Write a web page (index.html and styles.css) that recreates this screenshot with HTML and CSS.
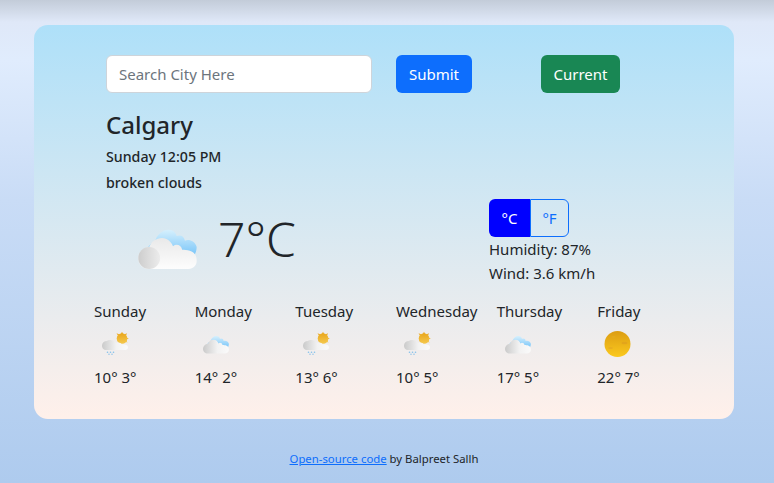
FILE: index.html
```html
<!DOCTYPE html>
<html lang="en">
<head>
<meta charset="utf-8">
<title>Weather</title>
<link rel="stylesheet" href="styles.css">
</head>
<body>
<svg class="defs" width="0" height="0" aria-hidden="true">
  <defs>
    <linearGradient id="gBlue" x1="0" y1="0" x2="0" y2="1"><stop offset="0" stop-color="#d6f0fd"/><stop offset="1" stop-color="#72c2f8"/></linearGradient>
    <linearGradient id="gWhite" x1="0" y1="0" x2="0" y2="1"><stop offset="0" stop-color="#e9e9e9"/><stop offset="1" stop-color="#fdfdfd"/></linearGradient>
    <linearGradient id="gGrey" x1="0" y1="0" x2="1" y2="0"><stop offset="0" stop-color="#cdcdcd"/><stop offset="1" stop-color="#ececec"/></linearGradient>
    <linearGradient id="gFade" x1="0" y1="0" x2="1" y2="0"><stop offset="0" stop-color="#cacaca"/><stop offset=".55" stop-color="#f2f2f2"/><stop offset="1" stop-color="#fafafa"/></linearGradient>
    <linearGradient id="gSun" x1="0" y1="0" x2="0" y2="1"><stop offset="0" stop-color="#dc9d12"/><stop offset="1" stop-color="#fbc91e"/></linearGradient>
    <linearGradient id="gRay" x1="0" y1="0" x2="0" y2="1"><stop offset="0" stop-color="#e9a61c"/><stop offset="1" stop-color="#f5c94e"/></linearGradient>
    <symbol id="cloud" viewBox="0 0 64 48">
      <path fill="url(#gBlue)" d="M11 30C9 24 12 19 18 18C20 9 27 4 33 4C38 4 41 7 42 11C46 9 50 11 51 16C56 14 62 17 64 23C64 27 62 31 60 34H14Z"/>
      <path fill="url(#gWhite)" d="M12 47C5 47 0 42 0 35C0 29 5 24 12 23C14 17 20 13 26 13C32 13 36 17 38 22C42 19 47 21 48 26C54 26 64 27 64 38C64 43 60 47 55 47Z"/>
      <circle cx="12" cy="35" r="12" fill="url(#gGrey)"/>
    </symbol>
    <symbol id="cloud-small" viewBox="0 0 64 48">
      <path fill="url(#gBlue)" d="M11 30C9 24 12 19 18 18C20 9 27 4 33 4C38 4 41 7 42 11C46 9 50 11 51 16C56 14 62 17 64 23C64 27 62 31 60 34H14Z"/>
      <path fill="url(#gFade)" d="M12 47C5 47 0 42 0 35C0 29 5 24 12 23C14 17 20 13 26 13C32 13 36 17 38 22C42 19 47 21 48 26C54 26 64 27 64 38C64 43 60 47 55 47Z"/>
    </symbol>
    <symbol id="rain" viewBox="0 0 30 30">
      <g fill="url(#gRay)">
        <circle cx="21" cy="8.500" r="5.300"/>
        <path d="M21 1.800L22.200 4H19.800ZM27.800 8.500L25 9.700V7.300ZM26 3.300L24.800 6.200L23 4.600ZM15.500 3.300L18.800 4.600L17.300 6.200ZM26.500 13L24 11L25 9.800Z"/>
      </g>
      <path fill="url(#gFade)" d="M5 20C2 20 1 17.500 1 15.500C1 13 3 11 6 11C7 10 10 9.500 12 10.500C13.500 11 14.500 12 15 13C18 12 20 13 20.500 14.200C24 14 27 15 27 17.500C27 19.500 25 20 23 20Z"/>
      <g fill="#86c1ea">
        <circle cx="6.500" cy="22.200" r=".8"/><circle cx="9.500" cy="22.200" r=".8"/><circle cx="12.500" cy="22.200" r=".8"/>
        <circle cx="8" cy="24.300" r=".7"/><circle cx="11" cy="24.300" r=".7"/>
      </g>
    </symbol>
    <symbol id="sun" viewBox="0 0 30 30">
      <circle cx="13.500" cy="14" r="13" fill="url(#gSun)"/>
      <ellipse cx="20.500" cy="13" rx="3" ry="1.200" fill="#e2a51c"/>
      <ellipse cx="6.500" cy="18" rx="2.500" ry="1" fill="#e8ae20"/>
      <ellipse cx="9.500" cy="7" rx="2" ry=".8" fill="#e5ab1e"/>
    </symbol>
  </defs>
</svg>
<main class="card">
  <form class="search">
    <input class="search-input" type="text" placeholder="Search City Here">
    <button class="btn btn-blue" type="button">Submit</button>
    <button class="btn btn-green" type="button">Current</button>
  </form>
  <h1 class="city">Calgary</h1>
  <p class="meta">Sunday 12:05 PM</p>
  <p class="meta">broken clouds</p>
  <section class="now">
    <div class="now-left">
      <svg class="now-icon" viewBox="0 0 64 48"><use href="#cloud"/></svg>
      <span class="now-temp">7°C</span>
    </div>
    <div class="now-right">
      <div class="toggle"><span class="toggle-on">°C</span><span class="toggle-off">°F</span></div>
      <p class="stat">Humidity: 87%</p>
      <p class="stat">Wind: 3.6 km/h</p>
    </div>
  </section>
  <section class="forecast">
    <div class="day"><div class="day-name">Sunday</div><svg class="day-icon" viewBox="0 0 30 30"><use href="#rain"/></svg><div class="day-temp">10° 3°</div></div>
    <div class="day"><div class="day-name">Monday</div><svg class="day-icon" viewBox="-2.500 -11 74 74"><use href="#cloud-small" width="64" height="48"/></svg><div class="day-temp">14° 2°</div></div>
    <div class="day"><div class="day-name">Tuesday</div><svg class="day-icon" viewBox="0 0 30 30"><use href="#rain"/></svg><div class="day-temp">13° 6°</div></div>
    <div class="day"><div class="day-name">Wednesday</div><svg class="day-icon" viewBox="0 0 30 30"><use href="#rain"/></svg><div class="day-temp">10° 5°</div></div>
    <div class="day"><div class="day-name">Thursday</div><svg class="day-icon" viewBox="-2.500 -11 74 74"><use href="#cloud-small" width="64" height="48"/></svg><div class="day-temp">17° 5°</div></div>
    <div class="day"><div class="day-name">Friday</div><svg class="day-icon" viewBox="0 0 30 30"><use href="#sun"/></svg><div class="day-temp">22° 7°</div></div>
  </section>
</main>
<footer class="foot"><a href="#">Open-source code</a> by Balpreet Sallh</footer>
</body>
</html>
```
FILE: styles.css
```css
* { box-sizing: border-box; }
html, body { height: 100%; }
body {
  margin: 0;
  padding: 25px 6px 0 0;
  overflow: hidden;
  font-family: "Noto Sans", "Open Sans", sans-serif;
  font-size: 15px;
  color: #212529;
  background: linear-gradient(180deg, #c3ccd9 0, #dfe8f8 22px, #e0ecfd 60px, #c9dcf6 200px, #aecbee 100%);
}
.defs { position: absolute; }
p { margin: 0; }
.card {
  width: 700px;
  height: 394px;
  margin: 0 auto;
  padding: 30px 0 0 72px;
  border-radius: 14px;
  background: linear-gradient(180deg, #aee0f9 0, #fff0ea 100%);
}
.search { display: flex; align-items: center; height: 38px; }
.search-input {
  width: 266px;
  height: 38px;
  padding: 0 12px;
  border: 1px solid #ced4da;
  border-radius: 6px;
  background: #fff;
  font: inherit;
  color: #212529;
}
.search-input::placeholder { color: #6c757d; opacity: 1; }
.btn {
  height: 38px;
  border: 0;
  border-radius: 6px;
  color: #fff;
  font: inherit;
  padding: 0;
}
.btn-blue { width: 76px; margin-left: 24px; background: #0d6efd; }
.btn-green { width: 79px; margin-left: 69px; background: #198754; }
.city { margin: 14px 0 0; height: 35px; line-height: 35px; font-size: 24px; font-weight: 500; }
.meta { height: 26px; line-height: 26px; font-size: 14.2px; font-weight: 500; }
.city + .meta { margin-top: 2px; }
.now { display: flex; height: 90px; }
.now-left { display: flex; align-items: flex-start; width: 383px; padding-left: 32px; }
.now-icon { width: 59px; height: 44px; margin-top: 30px; }
.now-temp { margin: 13px 0 0 21px; font-size: 48px; font-weight: 300; line-height: 60px; }
.toggle { display: flex; width: 80px; height: 38px; margin-top: 3px; text-align: center; line-height: 38px; }
.toggle-on { width: 41px; background: #0000ff; color: #fff; border-radius: 6px 0 0 6px; }
.toggle-off { flex: 1; color: #0d6efd; border: 1px solid #0d6efd; border-radius: 0 6px 6px 0; line-height: 36px; }
.stat { height: 24px; line-height: 24px; }
.forecast {
  display: grid;
  grid-template-columns: repeat(6, 100.67px);
  margin: 13px 0 0 -12px;
}
.day-name { height: 24px; line-height: 24px; }
.day-icon { display: block; width: 30px; height: 30px; margin: 7px 0 0 7px; }
.day-temp { height: 24px; line-height: 24px; margin-top: 5px; }
.foot { margin-top: 31px; text-align: center; font-size: 11.35px; line-height: 18px; }
.foot a { color: #0d6efd; }
```
